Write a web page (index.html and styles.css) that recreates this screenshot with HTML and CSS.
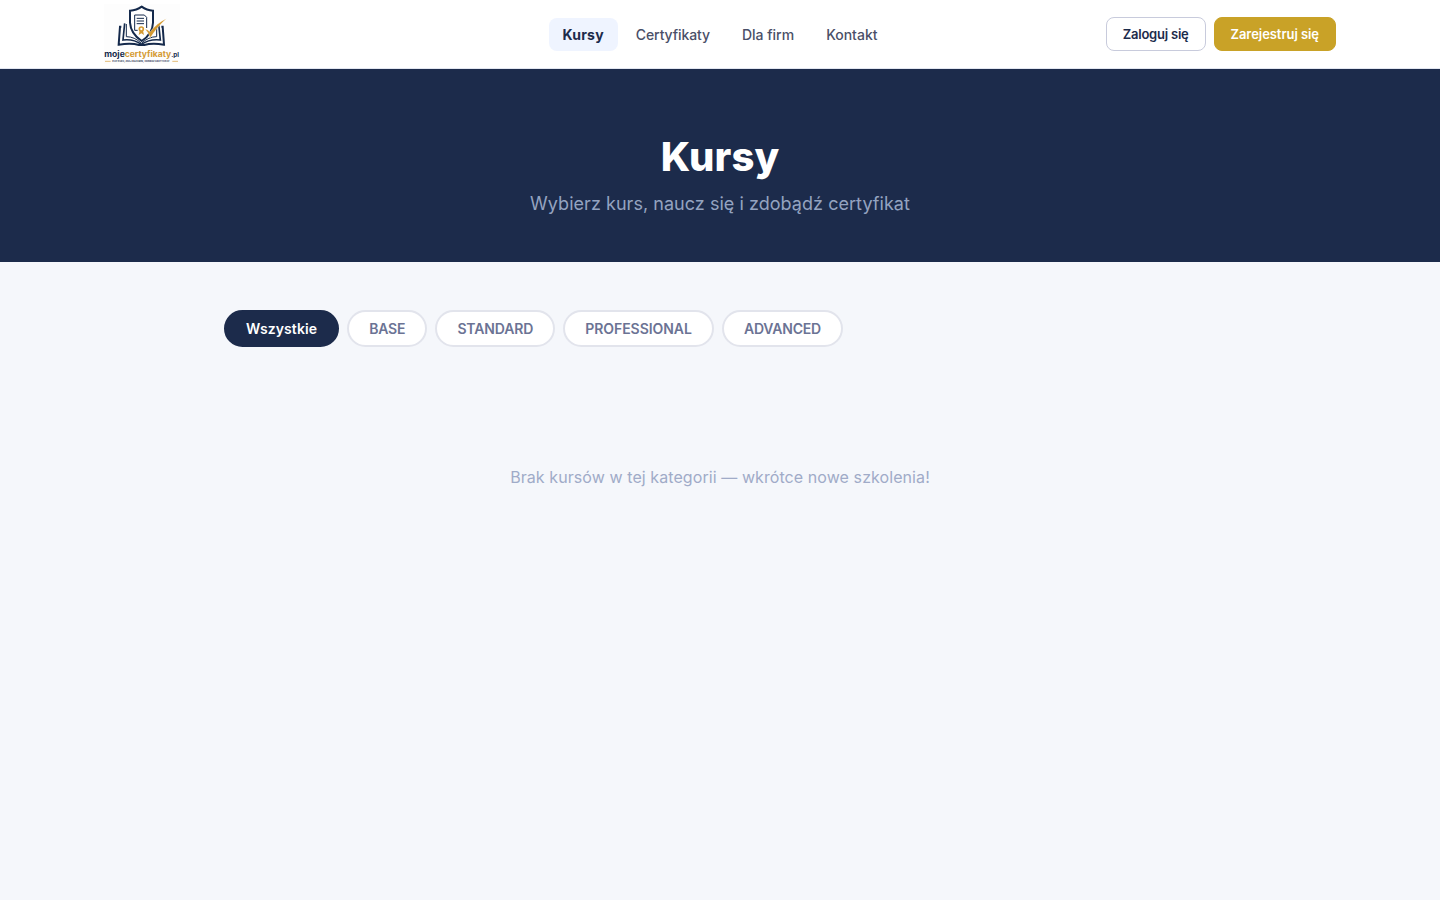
FILE: index.html
```
<!DOCTYPE html>
<html lang="pl">
<head>
  <meta charset="UTF-8">
  <meta name="viewport" content="width=device-width, initial-scale=1.0">
  <title>Kursy</title>
  <link rel="stylesheet" href="styles.css">
</head>
<body>
  <header class="header">
    <div class="header-inner">
      <a href="#" class="logo" aria-label="mojecertyfikaty.pl">
        <svg viewBox="0 0 228 180" width="76" height="60">
          <rect width="228" height="180" fill="#fdfdfd"/>
          <!-- Book -->
          <g fill="none" stroke="#14294b" stroke-width="6">
            <path d="M52 68H48L44 122Q82 116 105 123H121Q144 116 180 122L176 68H172"/>
            <path d="M62 58L57 108Q88 104 112 121Q138 104 169 108L164 60" stroke-width="5"/>
            <path d="M67 60V98Q92 98 112 118Q134 98 158 98V68" stroke-width="3"/>
          </g>
          <!-- Shield -->
          <path d="M113 8Q128 19 147 20V56Q146 89 113 111Q80 89 78 56V20Q98 19 113 8Z" fill="#fff" stroke="#14294b" stroke-width="6"/>
          <!-- Certificate -->
          <path d="M101 79H92V33H121L128 40V72" fill="#fff" stroke="#14294b" stroke-width="3"/>
          <path d="M98 43H120M98 51H120M98 59H120" stroke="#14294b" stroke-width="3"/>
          <path d="M107 80L104 93L112 88L120 93L117 80" fill="#d49a32"/>
          <circle cx="112" cy="75" r="6" fill="#fff" stroke="#d49a32" stroke-width="5"/>
          <path d="M123 75Q132 76 138 84Q158 57 187 44Q158 70 139 101Q134 86 123 75Z" fill="#d49a32" stroke="#fff" stroke-width="1"/>
          <text x="1" y="159" class="logo-name" textLength="224" lengthAdjust="spacingAndGlyphs">moje<tspan class="logo-gold">certyfikaty</tspan><tspan class="logo-tld">.pl</tspan></text>
          <path d="M3 172H20M205 172H222" stroke="#d49a32" stroke-width="2"/>
          <text x="25" y="175" class="logo-tagline" textLength="172" lengthAdjust="spacingAndGlyphs">KUP KURS, ZDAJ EGZAMIN, ODBIERZ CERTYFIKAT</text>
        </svg>
      </a>
      <nav class="nav">
        <a href="#" class="active">Kursy</a>
        <a href="#" class="nav-certs">Certyfikaty</a>
        <a href="#">Dla firm</a>
        <a href="#">Kontakt</a>
      </nav>
      <div class="header-actions">
        <a href="#" class="btn btn-outline">Zaloguj się</a>
        <a href="#" class="btn btn-gold">Zarejestruj się</a>
      </div>
    </div>
  </header>

  <section class="hero">
    <h1>Kursy</h1>
    <p>Wybierz kurs, naucz się i zdobądź certyfikat</p>
  </section>

  <main class="content">
    <div class="filters">
      <button class="filter-btn active">Wszystkie</button>
      <button class="filter-btn base">BASE</button>
      <button class="filter-btn standard">STANDARD</button>
      <button class="filter-btn professional">PROFESSIONAL</button>
      <button class="filter-btn advanced">ADVANCED</button>
    </div>
    <div class="empty">Brak kursów w tej kategorii — wkrótce nowe szkolenia!</div>
  </main>
</body>
</html>
```
FILE: styles.css
```
* {
  margin: 0;
  padding: 0;
  box-sizing: border-box;
}

body {
  font-family: 'Inter', sans-serif;
  background-color: #f5f7fb;
  color: #1c2b4b;
  min-height: 100vh;
}

a {
  text-decoration: none;
}

/* Header */
.header {
  background-color: #fff;
  border-bottom: 1px solid #e2e6f0;
}

.header-inner {
  display: grid;
  grid-template-columns: 1fr auto 1fr;
  align-items: center;
  max-width: 1280px;
  height: 68px;
  margin: 0 auto;
  padding: 0 24px;
}

.logo {
  justify-self: start;
}

.logo,
.logo svg {
  display: block;
}

.logo-name {
  font-size: 23px;
  font-weight: 700;
  fill: #14294b;
}

.logo-gold {
  fill: #d49a32;
}

.logo-tld {
  font-size: 17px;
}

.logo-tagline {
  font-size: 8px;
  font-weight: 600;
  fill: #14294b;
}

.nav {
  display: flex;
  gap: 4px;
}

.nav a {
  padding: 8px 14px;
  border-radius: 8px;
  font-size: 14px;
  font-weight: 500;
  color: #4a4f68;
}

.nav a.active {
  background-color: #eff4ff;
  color: #1c2b4b;
  font-weight: 700;
  letter-spacing: 0.2px;
}

.nav a.nav-certs {
  letter-spacing: -0.1px;
}

.header-actions {
  display: flex;
  justify-content: flex-end;
  gap: 8px;
}

.btn {
  padding: 8px 16px;
  border: 1px solid #c8cbdc;
  border-radius: 8px;
  font-size: 13px;
  font-weight: 600;
}

.btn-outline {
  color: #1c2b4b;
  letter-spacing: -0.22px;
}

.btn-gold {
  background-color: #c9a227;
  border-color: #c9a227;
  color: #fff;
  letter-spacing: -0.06px;
}

/* Hero */
.hero {
  background-color: #1c2b4b;
  padding: 63px 24px 48px;
  text-align: center;
}

.hero h1 {
  font-size: 40px;
  font-weight: 800;
  color: #fff;
  letter-spacing: 0.1px;
  margin-bottom: 12px;
}

.hero p {
  font-size: 18px;
  color: #94a3c0;
  letter-spacing: 0.04px;
}

/* Courses */
.content {
  max-width: 1040px;
  margin: 0 auto;
  padding: 48px 24px;
}

.filters {
  display: flex;
  gap: 8px;
  margin-bottom: 40px;
}

.filter-btn {
  padding: 8px 20px;
  border: 2px solid #e2e4ec;
  border-radius: 20px;
  background-color: #fff;
  font-family: inherit;
  font-size: 14px;
  font-weight: 600;
  color: #6b7394;
  cursor: pointer;
}

.filter-btn.active {
  background-color: #1c2b4b;
  border-color: #1c2b4b;
  color: #fff;
  letter-spacing: 0.1px;
}

.filter-btn.base {
  letter-spacing: -0.15px;
}

.filter-btn.standard {
  letter-spacing: -0.15px;
}

.filter-btn.professional {
  letter-spacing: -0.04px;
}

.filter-btn.advanced {
  letter-spacing: -0.18px;
}

.empty {
  padding: 80px 0;
  text-align: center;
  font-size: 16px;
  letter-spacing: 0.08px;
  color: #a0abc8;
}
```
